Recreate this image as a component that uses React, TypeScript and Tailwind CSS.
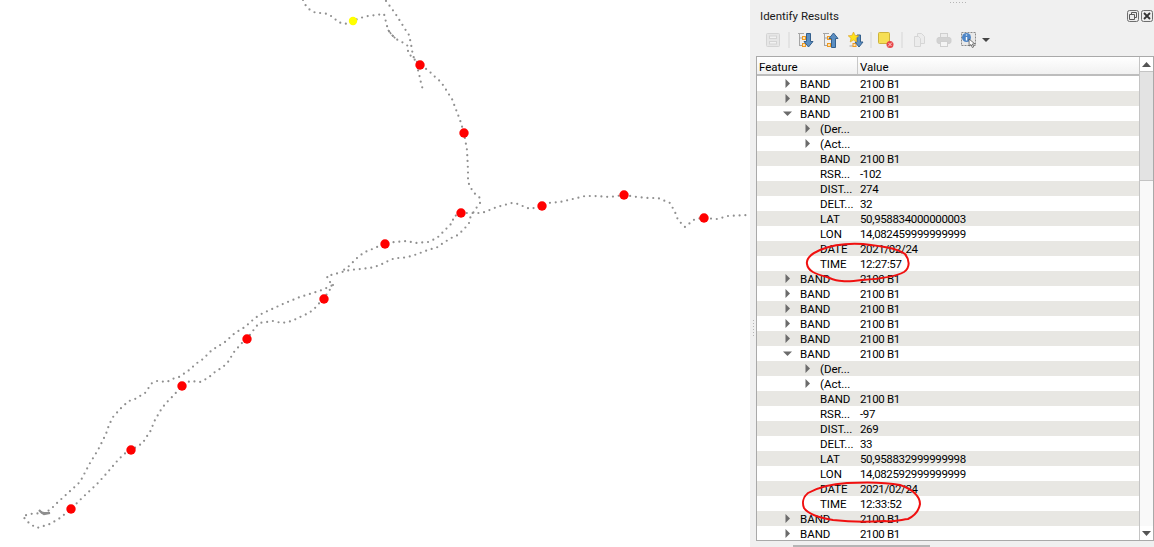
const upperNorth = "303,0 306,6 310,10 316,13 322,13 328,14 334,18 338,22 345,24 353,21 360,18 368,16 376,15 384,14 386,22 388,30 392,35 396,39 402,42 408,46 408,53 413,58 420,65";
const spur = "420,65 418,70 420,78 421,83 423,90";
const northRoad = "386,1 392,9 395,13 400,21 405,29 409,35 411,44 413,56 416,61 420,65 425,68 430,72 434,76 441,82 445,88 448,93 452,99 455,107 460,120 464,133 467,150 468,170 468,182 473,192 480,198 480,203 477,207 473,213 470,218 469,223 465,228 458,235 453,237 443,243 438,247 428,250 420,253 412,256 402,258 395,258 388,261 382,264 377,266 370,268 360,269 350,270 342,272 335,274 327,276 328,280 333,285 322,290 313,293 300,297 285,303 270,310 263,313 255,318 245,327 235,333 225,342 217,347 212,350 203,359 197,363 188,371 179,377 172,379 167,382 157,381 152,383 145,393 135,399 129,401 122,407 113,417 109,425 106,434 98,450 90,463 80,482 68,493 58,502 50,510 43,513 30,514 23,516 25,519 30,524 37,528 50,524 60,518 71,509";
const midBranch = "461,213 453,217 453,222 450,225 443,232 437,238 428,242 415,243 407,241 395,242 385,243 375,248 365,252 358,257 352,263 347,268 340,272";
const southRoad = "333,285 327,294 323,299 315,308 309,313 300,317 292,321 282,323 273,321 267,322 259,323 252,332 247,339 242,343 234,352 228,362 223,367 215,372 208,378 200,382 190,381 182,386 173,396 168,401 162,408 155,420 150,432 145,439 143,443 131,450 124,454 118,460 107,473 97,484 82,498 71,509";
const eastRoad = "461,213 470,213 482,213 497,207 512,203 518,204 525,207 530,209 542,206 548,203 560,202 577,198 585,196 595,196 610,197 624,195 637,197 648,198 658,198 670,203 675,212 678,220 685,227 695,219 703,218 717,219 728,216 748,215";
const redDots = [[420, 65], [464, 133], [461, 213], [542, 206], [624, 195], [704, 218], [385, 244], [324, 299], [247, 339], [182, 386], [131, 450], [71, 509]];

type Row = { f: string; v: string; level?: number; arrow?: "closed" | "open" };

function band(arrow: "closed" | "open" = "closed"): Row {
  return { f: "BAND", v: "2100 B1", arrow };
}

function feature(rsr: string, dist: string, delt: string, lat: string, lon: string, time: string): Row[] {
  return [
    band("open"),
    { f: "(Der...", v: "", level: 1, arrow: "closed" },
    { f: "(Act...", v: "", level: 1, arrow: "closed" },
    { f: "BAND", v: "2100 B1", level: 1 },
    { f: "RSR...", v: rsr, level: 1 },
    { f: "DIST...", v: dist, level: 1 },
    { f: "DELT...", v: delt, level: 1 },
    { f: "LAT", v: lat, level: 1 },
    { f: "LON", v: lon, level: 1 },
    { f: "DATE", v: "2021/02/24", level: 1 },
    { f: "TIME", v: time, level: 1 },
  ];
}

const rows: Row[] = [
  band(),
  band(),
  ...feature("-102", "274", "32", "50,958834000000003", "14,082459999999999", "12:27:57"),
  band(),
  band(),
  band(),
  band(),
  band(),
  ...feature("-97", "269", "33", "50,958832999999998", "14,082592999999999", "12:33:52"),
  band(),
  band(),
];

function TreeArrow({ open }: { open: boolean }) {
  return open ? (
    <svg width="9" height="9" viewBox="0 0 9 9">
      <path d="M0 2.5h9L4.5 7z" fill="#6b6b6b" />
    </svg>
  ) : (
    <svg width="9" height="9" viewBox="0 0 9 9">
      <path d="M2.5 0v9L7 4.5z" fill="#6b6b6b" />
    </svg>
  );
}

function MiniTree() {
  return (
    <g>
      <path d="M0 1.5h6M1.5 1.5v12.5M1.5 6h3M1.5 13.5h3" stroke="#a5a5a5" fill="none" />
      <rect x="4.5" y="4.5" width="3" height="3" fill="#fde3b5" stroke="#ee9a22" />
      <rect x="4.5" y="11.5" width="3" height="3" fill="#fde3b5" stroke="#ee9a22" />
    </g>
  );
}

function ToolIcon({ name }: { name: string }) {
  return (
    <div className="flex w-[25px] items-center justify-center">
      <svg width="16" height="16" viewBox="0 0 16 16">
        {name === "tree" && (
          <g fill="none" stroke="#d4d4d4">
            <rect x="1.5" y="1.5" width="13" height="13" rx="1" fill="#e6e6e6" />
            <rect x="4.5" y="4" width="7" height="2.5" fill="#f2f2f2" />
            <rect x="4.5" y="9.5" width="7" height="2.5" fill="#f2f2f2" />
          </g>
        )}
        {name === "expand" && (
          <g>
            <MiniTree />
            <path d="M8.5 1.5h4v8H15L10.5 15 6 9.5h2.5z" fill="#5c8fc2" stroke="#35608d" />
          </g>
        )}
        {name === "collapse" && (
          <g>
            <MiniTree />
            <path d="M8.5 15.5h4v-9H15L10.5 1 6 6.5h2.5z" fill="#5c8fc2" stroke="#35608d" />
          </g>
        )}
        {name === "star" && (
          <g>
            <path d="M1.5 14h4" stroke="#a5a5a5" />
            <rect x="5" y="11.5" width="3" height="3" fill="#fde3b5" stroke="#ee9a22" />
            <path d="M9 3h3.5v7H15l-4 5-4-5h2z" fill="#5c8fc2" stroke="#35608d" />
            <path d="M5.5 0l1.6 3.4 3.7.4-2.8 2.5.8 3.7-3.3-1.9-3.3 1.9.8-3.7L.2 3.8l3.7-.4z" fill="#ffe11a" stroke="#d99a1c" strokeWidth="0.6" />
          </g>
        )}
        {name === "highlight" && (
          <g>
            <rect x="0.5" y="0.5" width="11" height="11" rx="1" fill="#f6df55" stroke="#cdb33c" />
            <circle cx="12" cy="12.5" r="3.5" fill="#e8474a" />
            <path d="M10 14.5l4-4M10.5 11l3 3" stroke="#fbd4d4" />
          </g>
        )}
        {name === "copy" && (
          <g fill="#ececec" stroke="#d6d6d6">
            <path d="M6.5 1.5h4l3 3v7h-7z" />
            <path d="M3.5 4.5h4l2 2v8h-6z" />
          </g>
        )}
        {name === "print" && (
          <g stroke="#cfcfcf">
            <rect x="4.5" y="1.5" width="7" height="4" fill="#ececec" />
            <rect x="1" y="5.5" width="14" height="6" rx="2" fill="#d2d2d2" />
            <rect x="4.5" y="9.5" width="7" height="5" fill="#f4f4f4" />
          </g>
        )}
        {name === "identify" && (
          <g>
            <rect x="0.5" y="0.5" width="14" height="13" fill="#e9e9e9" stroke="#8a8a8a" strokeDasharray="2 1" />
            <circle cx="5.5" cy="5.5" r="4.5" fill="#4f86c6" />
            <path d="M5.5 2.5v1M5.5 5v3.5" stroke="#fff" strokeWidth="1.4" />
            <path d="M8 7l.2 7 1.8-1.5 1.3 3 1.4-.6-1.3-2.9 2.4-.2z" fill="#fff" stroke="#444" strokeWidth="0.7" />
          </g>
        )}
      </svg>
    </div>
  );
}

function ToolSep({ className }: { className: string }) {
  return (
    <div className={`flex justify-center ${className}`}>
      <div className="h-[16px] w-[2px] bg-[#e3e3e3]" />
    </div>
  );
}

function Track({ points }: { points: string }) {
  return <polyline points={points} fill="none" stroke="#909090" strokeWidth="2.2" strokeLinecap="round" strokeDasharray="0 5.8" />;
}

export default function App() {
  return (
    <div className="relative flex h-[547px] w-[1154px] overflow-hidden bg-white font-['Roboto',sans-serif] text-[11.5px] leading-none text-black">
      {/* Map canvas */}
      <div className="h-full w-[750px] shrink-0 bg-white">
        <svg width="750" height="547" viewBox="0 0 750 547" className="block">
          <Track points={upperNorth} />
          <Track points={spur} />
          <Track points={northRoad} />
          <Track points={midBranch} />
          <Track points={southRoad} />
          <Track points={eastRoad} />
          <path d="M39 510l3 3 8 0-6 1-3-2" stroke="#8e8e8e" strokeWidth="2.2" fill="none" />
          <path d="M388 30l4 5 4 4" stroke="#8e8e8e" strokeWidth="1.6" strokeDasharray="2 1" fill="none" />
          {redDots.map(([x, y]) => (
            <circle key={`${x}-${y}`} cx={x} cy={y} r="4.7" fill="#ff0000" />
          ))}
          <circle cx="353" cy="21" r="4.2" fill="#ffff00" />
        </svg>
      </div>

      {/* Identify Results dock */}
      <div className="flex h-full w-[404px] shrink-0 flex-col bg-[#f0f0f0] pl-[6px]">
        <div className="flex h-[4px] justify-center gap-[2px] pt-[2px] pl-[6px]">
          {[0, 1, 2, 3, 4, 5].map((i) => (
            <div key={i} className="h-[1px] w-[1px] bg-[#b5b5b5]" />
          ))}
        </div>
        <div className="flex h-[22px] items-center justify-between pr-[1px] pl-[4px]">
          <span className="pt-[4px] text-[#1a1a1a]">Identify Results</span>
          <div className="flex gap-[2px] pt-[2px]">
            <svg width="12" height="12" viewBox="0 0 12 12">
              <rect x="0.5" y="0.5" width="11" height="11" rx="2" fill="#ececec" stroke="#6e6e6e" />
              <path d="M4.5 4.5V2.5h5v5h-2M2.5 4.5h5v5h-5z" fill="none" stroke="#5a5a5a" />
            </svg>
            <svg width="12" height="12" viewBox="0 0 12 12">
              <rect x="0.5" y="0.5" width="11" height="11" rx="2" fill="#ececec" stroke="#6e6e6e" />
              <path d="M3 3l6 6M9 3l-6 6" stroke="#333" strokeWidth="1.8" />
            </svg>
          </div>
        </div>
        <div className="flex h-[30px] items-center pb-[2px] pl-[4px]">
          <ToolIcon name="tree" />
          <ToolSep className="w-[8px]" />
          <ToolIcon name="expand" />
          <ToolIcon name="collapse" />
          <ToolIcon name="star" />
          <ToolSep className="w-[5px]" />
          <ToolIcon name="highlight" />
          <ToolSep className="w-[8px]" />
          <ToolIcon name="copy" />
          <ToolIcon name="print" />
          <ToolIcon name="identify" />
          <svg width="10" height="6" viewBox="0 0 10 6">
            <path d="M1 1h8L5 5z" fill="#444" />
          </svg>
        </div>

        {/* Results tree */}
        <div className="flex h-[485px] shrink-0 overflow-hidden border border-[#a9a9a9] bg-white">
          <div className="min-w-0 flex-1">
            <div className="flex h-[19px] border-b-2 border-[#bdbdbd] bg-gradient-to-b from-white to-[#f1f1f1]">
              <div className="flex w-[101px] items-center border-r border-[#c8c8c8] pt-[4px] pl-[2px]">Feature</div>
              <div className="flex items-center pt-[4px] pl-[2px]">Value</div>
            </div>
            {rows.map((row, i) => (
              <div key={i} className={`flex h-[15px] items-center ${i % 2 === 1 ? "bg-[#e8e7e3]" : "bg-white"}`}>
                <div className={`flex w-[103px] shrink-0 items-center ${row.level ? "pl-[46px]" : "pl-[26px]"}`}>
                  <div className="flex w-[17px] shrink-0 justify-start">
                    {row.arrow && <TreeArrow open={row.arrow === "open"} />}
                  </div>
                  <span className="whitespace-nowrap pt-[2px]">{row.f}</span>
                </div>
                <span className="whitespace-nowrap pt-[2px] tracking-[-0.35px]">{row.v}</span>
              </div>
            ))}
          </div>
          <div className="flex w-[14px] shrink-0 flex-col border-l border-[#c4c4c4] bg-[#f9f9f9]">
            <div className="flex h-[14px] items-center justify-center bg-white">
              <svg width="9" height="5" viewBox="0 0 9 5">
                <path d="M0 5h9L4.5 0z" fill="#555" />
              </svg>
            </div>
            <div className="h-[110px] border-y border-[#c4c4c4] bg-[#e3e3e3]" />
            <div className="flex-1" />
            <div className="flex h-[14px] items-center justify-center bg-white">
              <svg width="9" height="5" viewBox="0 0 9 5">
                <path d="M0 0h9L4.5 5z" fill="#555" />
              </svg>
            </div>
          </div>
        </div>
        <div className="mt-[4px] ml-[37px] h-[2px] w-[137px] bg-[#b5b5b5]" />
      </div>

      {/* Dock splitter grip */}
      <div className="absolute top-[320px] left-[753px] flex flex-col gap-[2px]">
        {[0, 1, 2, 3, 4, 5].map((i) => (
          <div key={i} className="h-[1px] w-[1px] bg-[#b5b5b5]" />
        ))}
      </div>

      {/* Hand-drawn annotations */}
      <svg width="1154" height="547" viewBox="0 0 1154 547" className="pointer-events-none absolute top-0 left-0">
        <g fill="none" stroke="#f01010" strokeWidth="2" strokeLinecap="round" strokeLinejoin="round">
          <path d="M863 244C848 243 832 245 820 250C811 254 806 259 807 264C808 271 815 274 827 277C832 279 836 281 842 281C848 282 855 281 862 280C878 279 895 277 904 272C910 268 910 260 905 254C897 248 880 246 863 244" />
          <path d="M920 504C920 496 912 489 900 485C885 482 865 482 847 483C830 484 817 488 808 493C803 497 802 503 804 508C808 514 820 518 833 520C850 522 870 522 885 521C892 522 900 520 908 519C916 515 919 510 920 504" />
        </g>
      </svg>
    </div>
  );
}
